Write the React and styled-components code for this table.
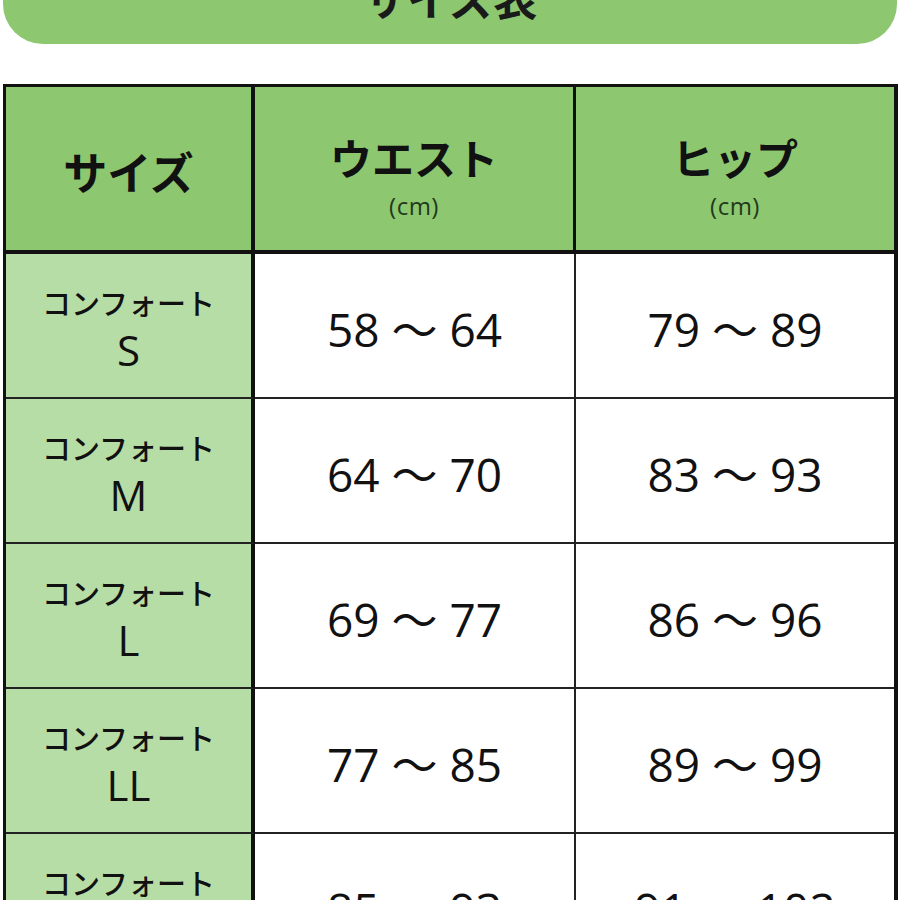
import React from "react";
import styled, { createGlobalStyle } from "styled-components";

const GlobalStyle = createGlobalStyle`
  html, body {
    margin: 0;
    padding: 0;
    background: #ffffff;
    overflow: hidden;
  }
  body {
    font-family: "Open Sans", "Noto Sans CJK JP", sans-serif;
    color: #111;
  }
  * { box-sizing: border-box; }
`;

const GREEN = "#8dc770";
const LIGHT = "#b7dda6";
const LINE = "#111";

const Page = styled.div`
  width: 900px;
  height: 900px;
  overflow: hidden;
`;

const Banner = styled.div`
  margin: -50px 3px 0 3px;
  height: 94px;
  background: ${GREEN};
  border-radius: 0 0 40px 40px;
  display: flex;
  align-items: center;
  justify-content: center;
  font-family: "Noto Sans CJK JP", sans-serif;
  font-weight: 700;
  font-size: 44px;
  line-height: 1;
  color: #1a1a1a;
`;

const Table = styled.div`
  margin: 40px 0 0 3px;
  width: 895px;
  display: grid;
  grid-template-columns: 249px 321px 1fr;
  grid-template-rows: 167px;
  grid-auto-rows: 145px;
  border-top: 3px solid ${LINE};
  border-left: 3px solid ${LINE};
  border-right: 4px solid ${LINE};
`;

const HeadCell = styled.div`
  background: ${GREEN};
  border-bottom: 4px solid ${LINE};
  border-right: ${(p) => (p.$last ? "none" : p.$first ? `4px solid ${LINE}` : `3px solid ${LINE}`)};
  display: flex;
  flex-direction: column;
  align-items: center;
  justify-content: ${(p) => (p.$first ? "center" : "flex-start")};
  padding-top: ${(p) => (p.$first ? "5px" : "47px")};
`;

const HeadTitle = styled.div`
  font-family: "Noto Sans CJK JP", sans-serif;
  font-weight: 700;
  font-size: ${(p) => (p.$big ? "44px" : "42px")};
  line-height: 46px;
  color: #111;
`;

const Unit = styled.div`
  font-family: "Open Sans", sans-serif;
  font-size: 24px;
  line-height: 28px;
  letter-spacing: 0.5px;
  margin-top: 12px;
  color: #1f3a1c;
`;

const LabelCell = styled.div`
  background: ${LIGHT};
  border-right: 4px solid ${LINE};
  border-bottom: 2px solid #222;
  display: flex;
  flex-direction: column;
  align-items: center;
  padding-top: 30px;
`;

const LabelName = styled.div`
  font-family: "Noto Sans CJK JP", sans-serif;
  font-weight: 500;
  font-size: 29px;
  line-height: 36px;
  color: #111;
`;

const LabelSize = styled.div`
  font-family: "Open Sans", sans-serif;
  font-size: 42px;
  line-height: 50px;
  margin-top: 5px;
  color: #111;
`;

const ValueCell = styled.div`
  background: #fff;
  border-bottom: 2px solid #222;
  border-right: ${(p) => (p.$last ? "none" : "2px solid #222")};
  display: flex;
  align-items: center;
  justify-content: center;
  padding-top: 2px;
  font-family: "Open Sans", "Noto Sans CJK JP", sans-serif;
  font-size: 46px;
  color: #111;
  white-space: pre;
`;

const rows = [
  { size: "S", waist: "58 ～ 64", hip: "79 ～ 89" },
  { size: "M", waist: "64 ～ 70", hip: "83 ～ 93" },
  { size: "L", waist: "69 ～ 77", hip: "86 ～ 96" },
  { size: "LL", waist: "77 ～ 85", hip: "89 ～ 99" },
  { size: "3L", waist: "85 ～ 93", hip: "91 ～ 102" },
];

export default function App() {
  return (
    <Page>
      <GlobalStyle />
      <Banner>サイズ表</Banner>
      <Table>
        <HeadCell $first>
          <HeadTitle $big>サイズ</HeadTitle>
        </HeadCell>
        <HeadCell>
          <HeadTitle>ウエスト</HeadTitle>
          <Unit>(cm)</Unit>
        </HeadCell>
        <HeadCell $last>
          <HeadTitle>ヒップ</HeadTitle>
          <Unit>(cm)</Unit>
        </HeadCell>
        {rows.map((r) => (
          <React.Fragment key={r.size}>
            <LabelCell>
              <LabelName>コンフォート</LabelName>
              <LabelSize>{r.size}</LabelSize>
            </LabelCell>
            <ValueCell>{r.waist}</ValueCell>
            <ValueCell $last>{r.hip}</ValueCell>
          </React.Fragment>
        ))}
      </Table>
    </Page>
  );
}
